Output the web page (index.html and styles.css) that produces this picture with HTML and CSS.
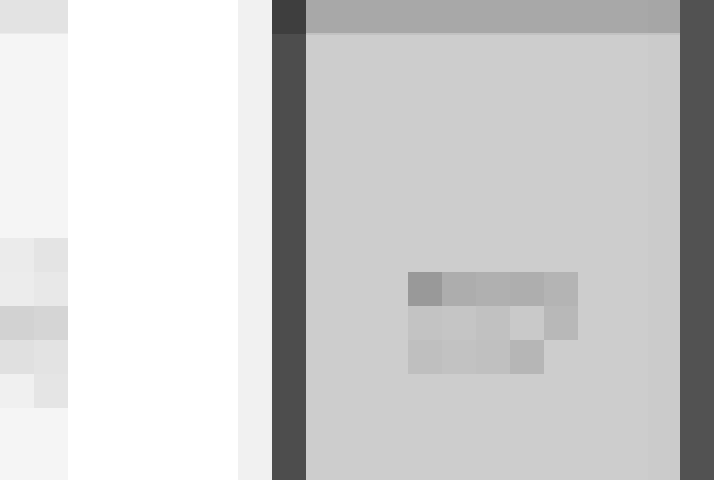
FILE: index.html
```html
<!DOCTYPE html>
<html>
<head>
<meta charset="utf-8">
<link rel="stylesheet" href="styles.css">
</head>
<body>
<div class="app">
  <aside class="side">
    <div class="side-head"></div>
    <div class="side-body">
      <div class="side-grid">
        <i class="s11"></i><i class="s12"></i>
        <i class="s21"></i><i class="s22"></i>
        <i class="s31"></i><i class="s32"></i>
        <i class="s41"></i><i class="s42"></i>
        <i class="s51"></i><i class="s52"></i>
      </div>
    </div>
  </aside>
  <section class="page"></section>
  <div class="gutter"></div>
  <div class="rail">
    <div class="rail-head"></div>
    <div class="rail-body"></div>
  </div>
  <main class="main">
    <div class="main-head"><div class="mh-a"></div><div class="mh-b"></div></div>
    <div class="main-body">
      <div class="main-inner">
        <div class="tiles">
          <i class="t11"></i><i class="t12"></i><i class="t13"></i><i class="t14"></i><i class="t15"></i>
          <i class="t21"></i><i class="t22"></i><i class="t23"></i><i class="t24"></i><i class="t25"></i>
          <i class="t31"></i><i class="t32"></i><i class="t33"></i><i class="t34"></i><i class="t35"></i>
        </div>
      </div>
      <div class="main-edge"></div>
    </div>
  </main>
  <div class="dark"></div>
  <div class="edge"></div>
</div>
</body>
</html>
```

FILE: styles.css
```css
html, body { margin: 0; padding: 0; }
body { width: 720px; height: 480px; overflow: hidden; font-family: "Liberation Sans", sans-serif; background: #ffffff; }
.app { display: flex; height: 480px; }

.side { width: 68px; display: flex; flex-direction: column; background: #f5f5f5; }
.side-head { height: 33px; background: #e3e3e3; border-bottom: 1px solid #ebebeb; }
.side-body { flex: 1; padding-top: 204px; }
.side-grid { display: grid; grid-template-columns: 34px 34px; grid-auto-rows: 34px; }
.side-grid i { display: block; }
.s11 { background: #ebebeb; } .s12 { background: #e4e4e4; }
.s21 { background: #ececec; } .s22 { background: #e8e8e8; }
.s31 { background: #d2d2d2; } .s32 { background: #d5d5d5; }
.s41 { background: #e0e0e0; } .s42 { background: #e3e3e3; }
.s51 { background: #f0f0f0; } .s52 { background: #e5e5e5; }

.page { width: 170px; background: #ffffff; }
.gutter { width: 34px; background: #f1f1f1; }

.rail { width: 34px; display: flex; flex-direction: column; background: #4d4d4d; }
.rail-head { height: 34px; background: #3e3e3e; }
.rail-body { flex: 1; }

.main { width: 374px; display: flex; flex-direction: column; background: #cdcdcd; }
.main-head { height: 33px; display: flex; border-bottom: 2px solid #c2c2c2; box-sizing: content-box; }
.mh-a { flex: 1; background: #a8a8a8; }
.mh-b { width: 32px; background: #a6a6a6; }
.main-body { flex: 1; display: flex; }
.main-inner { flex: 1; padding: 237px 0 0 102px; }
.main-edge { width: 32px; background: #cbcbcb; }
.tiles { display: grid; grid-template-columns: repeat(5, 34px); grid-auto-rows: 34px; }
.tiles i { display: block; }
.t11 { background: #999999; } .t12 { background: #adadad; } .t13 { background: #b0b0b0; } .t14 { background: #aeaeae; } .t15 { background: #b4b4b4; }
.t21 { background: #c3c3c3; } .t22 { background: #c5c5c5; } .t23 { background: #c1c1c1; } .t24 { background: #c9c9c9; } .t25 { background: #b8b8b8; }
.t31 { background: #bfbfbf; } .t32 { background: #c2c2c2; } .t33 { background: #c0c0c0; } .t34 { background: #b6b6b6; } .t35 { background: #cdcdcd; }

.dark { width: 34px; background: #525252; }
.edge { width: 6px; background: #ffffff; }
```
